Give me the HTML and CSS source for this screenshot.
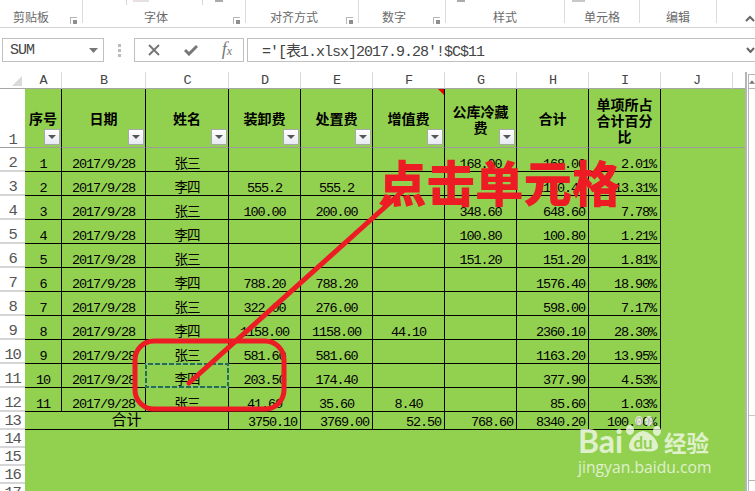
FILE: index.html
```html
<!DOCTYPE html>
<html lang="zh">
<head>
<meta charset="utf-8">
<title>点击单元格</title>
<link rel="stylesheet" href="styles.css">
</head>
<body>
<div class="app">
  <header class="ribbon">
    <div class="group g1"><span class="label">剪贴板</span><i class="launcher"></i></div>
    <div class="group g2"><span class="label">字体</span><i class="launcher"></i><b class="tick tick-a"></b><b class="tick tick-b"></b><b class="bit bit-pink"></b><b class="bit bit-grey"></b></div>
    <div class="group g3"><span class="label">对齐方式</span><i class="launcher"></i></div>
    <div class="group g4"><span class="label">数字</span><i class="launcher"></i></div>
    <div class="group g5"><span class="label">样式</span><b class="bit bit-style"></b></div>
    <div class="group g6"><span class="label">单元格</span><b class="bit bit-cell"></b></div>
    <div class="group g7"><span class="label">编辑</span></div>
    <svg class="collapse" width="10" height="7" viewBox="0 0 10 7"><polyline points="1,6 5,2 9,6" fill="none" stroke="#666" stroke-width="2"/></svg>
  </header>

  <section class="formula">
    <div class="namebox"><span>SUM</span><svg width="9" height="5" viewBox="0 0 9 5"><polygon points="0,0 9,0 4.5,5" fill="#777"/></svg></div>
    <div class="dots"><i></i><i></i><i></i></div>
    <div class="fnbtns">
      <svg width="12" height="12" viewBox="0 0 12 12"><path d="M1 1L11 11M11 1L1 11" stroke="#777" stroke-width="2" fill="none"/></svg>
      <svg width="14" height="12" viewBox="0 0 14 12"><path d="M1 6L5 10L13 2" stroke="#777" stroke-width="3" fill="none"/></svg>
      <span class="fx">f<small>x</small></span>
    </div>
    <div class="input"><span>='[表1.xlsx]2017.9.28'!$C$11</span>
      <svg width="9" height="6" viewBox="0 0 9 6"><polyline points="1,1 4.5,5 8,1" fill="none" stroke="#666" stroke-width="2"/></svg>
    </div>
  </section>

  <main class="workspace">
    <div class="sheet">
      <div class="ch corner"><i></i></div><div class="ch">A</div><div class="ch">B</div><div class="ch">C</div><div class="ch">D</div><div class="ch">E</div><div class="ch">F</div><div class="ch">G</div><div class="ch">H</div><div class="ch">I</div><div class="ch">J</div><div class="ch last"></div>

      <div class="rh head">1</div>
      <div class="hd">序号<i class="filter"></i></div><div class="hd">日期<i class="filter"></i></div><div class="hd">姓名<i class="filter"></i></div><div class="hd">装卸费<i class="filter"></i></div><div class="hd">处置费<i class="filter"></i></div>
      <div class="hd note">增值费<i class="filter"></i></div><div class="hd two">公库冷藏<br>费<i class="filter"></i></div><div class="hd">合计</div><div class="hd three">单项所占<br>合计百分<br>比</div><div class="hd-fill"></div>

      <div class="rh">2</div><div class="c">1</div><div class="c">2017/9/28</div><div class="c">张三</div><div class="c"></div><div class="c"></div><div class="c"></div><div class="c">168.00</div><div class="c r">168.00</div><div class="c p">2.01%</div>
      <div class="rh">3</div><div class="c">2</div><div class="c">2017/9/28</div><div class="c">李四</div><div class="c">555.2</div><div class="c">555.2</div><div class="c"></div><div class="c"></div><div class="c r">1110.40</div><div class="c p">13.31%</div>
      <div class="rh">4</div><div class="c">3</div><div class="c">2017/9/28</div><div class="c">张三</div><div class="c">100.00</div><div class="c">200.00</div><div class="c"></div><div class="c">348.60</div><div class="c r">648.60</div><div class="c p">7.78%</div>
      <div class="rh">5</div><div class="c">4</div><div class="c">2017/9/28</div><div class="c">李四</div><div class="c"></div><div class="c"></div><div class="c"></div><div class="c">100.80</div><div class="c r">100.80</div><div class="c p">1.21%</div>
      <div class="rh">6</div><div class="c">5</div><div class="c">2017/9/28</div><div class="c">张三</div><div class="c"></div><div class="c"></div><div class="c"></div><div class="c">151.20</div><div class="c r">151.20</div><div class="c p">1.81%</div>
      <div class="rh">7</div><div class="c">6</div><div class="c">2017/9/28</div><div class="c">李四</div><div class="c">788.20</div><div class="c">788.20</div><div class="c"></div><div class="c"></div><div class="c r">1576.40</div><div class="c p">18.90%</div>
      <div class="rh">8</div><div class="c">7</div><div class="c">2017/9/28</div><div class="c">张三</div><div class="c">322.00</div><div class="c">276.00</div><div class="c"></div><div class="c"></div><div class="c r">598.00</div><div class="c p">7.17%</div>
      <div class="rh">9</div><div class="c">8</div><div class="c">2017/9/28</div><div class="c">李四</div><div class="c">1158.00</div><div class="c">1158.00</div><div class="c">44.10</div><div class="c"></div><div class="c r">2360.10</div><div class="c p">28.30%</div>
      <div class="rh">10</div><div class="c">9</div><div class="c">2017/9/28</div><div class="c">张三</div><div class="c">581.60</div><div class="c">581.60</div><div class="c"></div><div class="c"></div><div class="c r">1163.20</div><div class="c p">13.95%</div>
      <div class="rh">11</div><div class="c">10</div><div class="c">2017/9/28</div><div class="c">李四</div><div class="c">203.50</div><div class="c">174.40</div><div class="c"></div><div class="c"></div><div class="c r">377.90</div><div class="c p">4.53%</div>
      <div class="rh">12</div><div class="c">11</div><div class="c">2017/9/28</div><div class="c">张三</div><div class="c">41.60</div><div class="c">35.60</div><div class="c">8.40</div><div class="c"></div><div class="c r">85.60</div><div class="c p">1.03%</div>
      <div class="rh">13</div><div class="c total">合计</div><div class="c r">3750.10</div><div class="c r">3769.00</div><div class="c r">52.50</div><div class="c r">768.60</div><div class="c r">8340.20</div><div class="c p">100.00%</div>
      <div class="rh">14</div>
      <div class="rh">15</div>
      <div class="rh">16</div>
      <div class="rh">17</div>
    </div>
    <aside class="scrollbar">
      <div class="arrow"><svg width="7" height="4" viewBox="0 0 7 4"><polygon points="0,4 7,4 3.5,0" fill="#777"/></svg></div>
      <div class="thumb"></div>
      <div class="track"></div>
      <div class="arrow"></div>
    </aside>
  </main>
</div>

<svg class="marks" width="755" height="491" viewBox="0 0 755 491">
  <rect x="146" y="364" width="82" height="23" fill="none" stroke="#217346" stroke-width="2"/>
  <rect x="146" y="364" width="82" height="23" fill="none" stroke="#fff" stroke-width="1" stroke-dasharray="2 5"/>
  <rect x="135" y="341" width="149" height="68" rx="19" fill="none" stroke="#ed1c24" stroke-width="5"/>
  <line x1="189" y1="383" x2="404" y2="190" stroke="#ed1c24" stroke-width="5" stroke-linecap="round"/>
</svg>
<div class="callout">点击单元格</div>

<div class="watermark">
  <div class="wm-top">
    <span class="wm-bai">Bai</span>
    <svg class="wm-paw" width="38" height="38" viewBox="0 0 38 38">
      <ellipse cx="6" cy="14" rx="4" ry="5"/>
      <ellipse cx="15" cy="5" rx="4" ry="5"/>
      <ellipse cx="25" cy="5" rx="4" ry="5"/>
      <ellipse cx="33" cy="15" rx="4" ry="5"/>
      <path d="M19 15C25 15 34 24 34 30C34 36 26 36 19 35C12 36 5 36 5 30C5 24 13 15 19 15Z"/>
      <text x="19" y="33" class="wm-du">du</text>
    </svg>
    <span class="wm-cn">经验</span>
  </div>
  <div class="wm-url">jingyan.baidu.com</div>
</div>
</body>
</html>
```
FILE: styles.css
```css
* { box-sizing: border-box; }
html, body { margin: 0; padding: 0; width: 755px; height: 491px; overflow: hidden; background: #fff; }
body { position: relative; font-family: "Liberation Mono", "Noto Sans CJK SC", monospace; color: #000; }
.app { width: 755px; height: 491px; display: flex; flex-direction: column; }

/* ribbon */
.ribbon { position: relative; height: 28px; display: flex; border-bottom: 1px solid #d2d2d2; flex: none; }
.group { position: relative; height: 23px; padding-top: 9px; display: flex; justify-content: center; border-right: 1px solid #dcdcdc; flex: none; }
.label { font: 12px/16px "Noto Sans CJK SC", sans-serif; color: #6a6a6a; }
.g1 { width: 83px; padding-right: 20px; }
.g2 { width: 163px; padding-right: 16px; }
.g3 { width: 113px; padding-right: 16px; }
.g4 { width: 87px; padding-right: 16px; }
.g5 { width: 119px; }
.g6 { width: 75px; }
.g7 { width: 77px; }
.launcher { position: absolute; right: 5px; top: 17px; width: 7px; height: 7px; border: 1px solid #b5b5b5; border-width: 1px 0 0 1px; }
.launcher::after { content: ""; position: absolute; right: 0; bottom: 0; width: 4px; height: 4px; background: #8f8f8f; }
.tick { position: absolute; top: 0; width: 1px; height: 5px; background: #d8d8d8; }
.tick-a { left: 43px; }
.tick-b { left: 119px; }
.bit { position: absolute; top: 0; height: 2px; }
.bit-pink { left: 50px; width: 16px; background: #e8dfe2; }
.bit-grey { left: 132px; width: 8px; background: #aaa; }
.bit-style { left: 11px; width: 8px; background: #aaa; }
.bit-cell { left: 7px; width: 13px; background: #c8c8c8; }
.collapse { position: absolute; left: 745px; top: 15px; }

/* formula bar */
.formula { flex: none; margin-top: 10px; height: 24px; display: flex; align-items: stretch; }
.namebox { margin-left: 2px; width: 102px; border: 1px solid #c0c0c0; display: flex; align-items: center; justify-content: space-between; padding: 0 5px 0 7px; font-size: 15px; letter-spacing: -1px; font-weight: 400; color: #444; }
.dots { width: 30px; display: flex; flex-direction: column; align-items: center; justify-content: center; gap: 2px; }
.dots i { width: 3px; height: 3px; background: #bbb; }
.fnbtns { width: 110px; border: 1px solid #c0c0c0; display: flex; align-items: center; justify-content: space-between; padding: 0 11px 0 13px; }
.fx { font: italic 18px/18px "Liberation Serif", serif; color: #777; }
.fx small { font-size: 12px; }
.input { flex: 1; margin-left: 3px; border: 1px solid #c0c0c0; border-right: 0; display: flex; align-items: center; justify-content: space-between; padding: 0 0 0 14px; font-size: 15px; color: #444; }
.input span { font-family: "Liberation Mono", "Noto Sans CJK SC", monospace; white-space: pre; letter-spacing: -1px; }

/* sheet */
.workspace { flex: none; margin-top: 10px; height: 419px; display: flex; overflow: hidden; }
.sheet { width: 747px; height: 430px; flex: none; background: #92d050; border-right: 2px solid #b5b5b5;
  display: grid;
  grid-template-columns: 25px 37px 84px 83px 72px 72px 72px 72px 72px 72px 72px 12px;
  grid-template-rows: 17px 59px repeat(11, 24px) repeat(5, 18px);
}
.ch { background: #fff; border-right: 1px solid #dadada; border-bottom: 1px solid #a6a6a6; font-size: 13.5px; letter-spacing: -1.1px; line-height: 17px; text-align: center; color: #444; }
.ch.last { border-right: 0; }
.corner { position: relative; border-right: 0; }
.corner i { position: absolute; left: 12px; top: 4px; border-style: solid; border-width: 0 0 10px 10px; border-color: transparent transparent #dadada transparent; }
.rh { grid-column: 1; background: #fff; border-bottom: 2px solid #d6d6d6; display: flex; align-items: flex-end; justify-content: center; font-size: 15.5px; letter-spacing: -1.3px; line-height: 14px; color: #555; }
.rh.head { border-bottom: 1px solid #a0a0a0; }
.hd { position: relative; border-right: 1px solid #000; border-bottom: 1px solid #9c9c9c; display: flex; align-items: center; justify-content: center; text-align: center; font: bold 14px/16px "Noto Sans CJK SC", sans-serif; }
.hd.two { display: block; padding-top: 14px; }
.hd.three { display: block; padding-top: 7px; }
.hd-fill { grid-column: span 2; border-bottom: 1px solid #9c9c9c; }
.note::before { content: ""; position: absolute; right: 0; top: 0; border-style: solid; border-width: 0 6px 6px 0; border-color: transparent #e00000 transparent transparent; }
.filter { position: absolute; right: 1px; bottom: 2px; width: 16px; height: 16px; background: linear-gradient(#fff, #e6e9f2); border: 1px solid #a9a9a9; }
.filter::after { content: ""; position: absolute; left: 3px; top: 5px; border-style: solid; border-width: 4px 4px 0 4px; border-color: #555 transparent transparent transparent; }
.c { border-right: 1px solid #000; border-bottom: 1px solid #000; display: flex; align-items: flex-end; justify-content: center; font-size: 13.5px; letter-spacing: -1.1px; line-height: 13px; white-space: nowrap; font-family: "Liberation Mono", "Noto Sans CJK SC", monospace; }
.c.r { justify-content: flex-end; padding-right: 3px; }
.c.p { justify-content: flex-end; padding-right: 4px; }
.c.total { grid-column: span 3; font-size: 15px; letter-spacing: 0; line-height: 15px; }

/* scrollbar */
.scrollbar { width: 7px; margin-left: 1px; margin-top: 2px; border-left: 1px solid #b5b5b5; display: flex; flex-direction: column; flex: none; }
.arrow { height: 15px; border-top: 1px solid #b5b5b5; border-bottom: 1px solid #b5b5b5; display: flex; align-items: center; justify-content: center; flex: none; }
.thumb { height: 327px; border-bottom: 1px solid #c8c8c8; flex: none; }
.track { height: 64px; background: #fff; flex: none; }

/* annotations */
.marks { position: absolute; left: 0; top: 0; }
.callout { position: absolute; left: 378px; top: 147px; font: 900 48.5px/68px "Noto Sans CJK SC", sans-serif; color: #ed1c24; white-space: nowrap; }
.watermark { position: absolute; left: 578px; top: 416px; color: #fff; opacity: .7; }
.wm-top { display: flex; align-items: flex-end; height: 38px; }
.wm-bai { font: bold 32px/27px "Lato", sans-serif; width: 46px; }
.wm-paw { fill: #fff; }
.wm-du { font: bold 17px "Lato", sans-serif; fill: #92d050; text-anchor: middle; }
.wm-cn { font: bold 22.5px/24px "Noto Sans CJK SC", sans-serif; margin-left: 2px; white-space: nowrap; }
.wm-url { font: 15.7px/20px "Open Sans", sans-serif; margin-top: 3px; white-space: nowrap; }
```
